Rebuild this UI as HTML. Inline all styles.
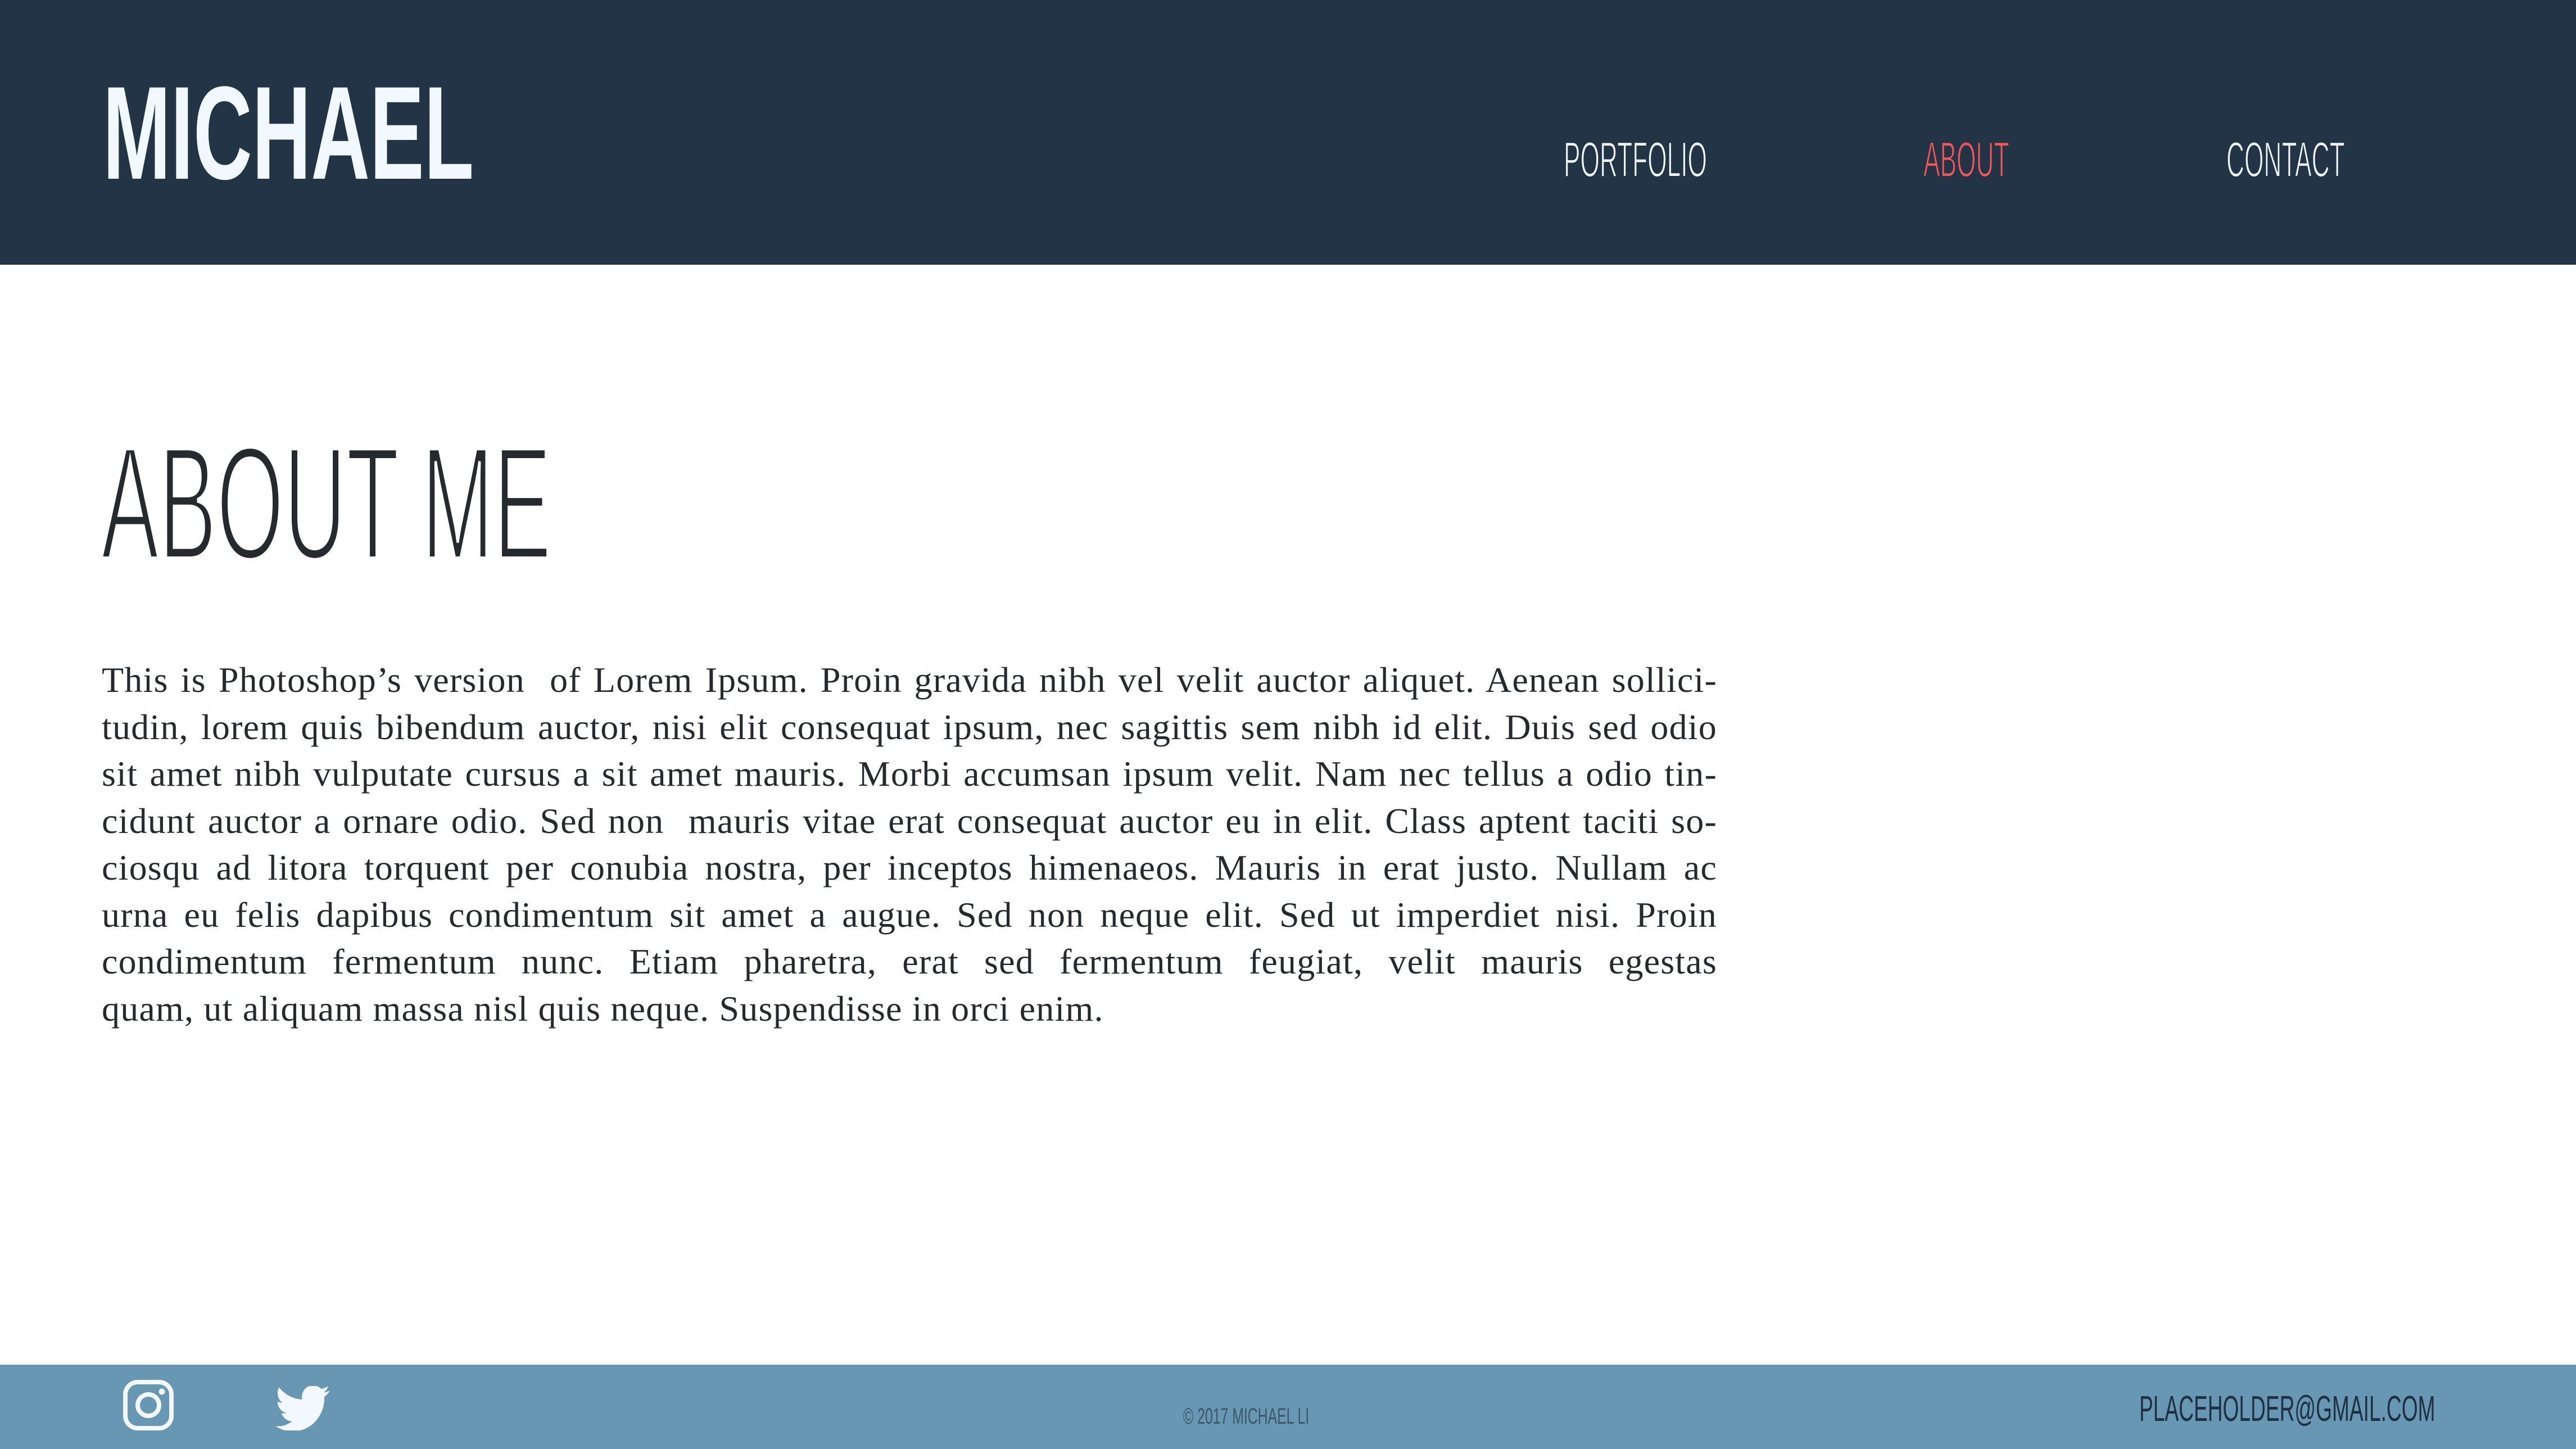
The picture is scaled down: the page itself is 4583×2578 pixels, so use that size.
<!DOCTYPE html>
<html><head><meta charset="utf-8"><style>
html,body{margin:0;padding:0}
body{width:4583px;height:2578px;position:relative;overflow:hidden;background:#fff;font-family:"Liberation Sans",sans-serif}
.hdr{position:absolute;left:0;top:0;width:4583px;height:471px;background:#243447}
.t{position:absolute;white-space:nowrap;line-height:1;transform-origin:0 0}
.logo{left:183px;top:119px;font-size:236px;font-weight:bold;color:#f1f8ff;transform:scaleX(.614)}
.nav{top:240px;font-size:88px;color:#f1f8ff;transform:scaleX(.503);-webkit-text-stroke:2px #243447}
.h1{left:180px;top:752px;font-size:286px;color:#26292e;transform:scaleX(.538);-webkit-text-stroke:8px #fff}
.p{position:absolute;left:181px;top:1168px;width:2874px;font-family:"Liberation Serif",serif;font-size:64px;color:#26292e;line-height:83.5px;letter-spacing:1.2px}
.p div{text-align:justify;text-align-last:justify;height:83.5px;white-space:nowrap}
.p div.l{text-align-last:left}
.ftr{position:absolute;left:0;top:2428px;width:4583px;height:150px;background:#6797b2}
</style></head><body>
<div class="hdr"></div>
<div class="t logo">MICHAEL</div>
<div class="t nav" style="left:2782px">PORTFOLIO</div>
<div class="t nav" style="left:3422px;color:#f25555">ABOUT</div>
<div class="t nav" style="left:3961px">CONTACT</div>
<div class="t h1">ABOUT ME</div>
<div class="p">
<div>This is Photoshop’s version&nbsp; of Lorem Ipsum. Proin gravida nibh vel velit auctor aliquet. Aenean sollici-</div>
<div>tudin, lorem quis bibendum auctor, nisi elit consequat ipsum, nec sagittis sem nibh id elit. Duis sed odio</div>
<div>sit amet nibh vulputate cursus a sit amet mauris. Morbi accumsan ipsum velit. Nam nec tellus a odio tin-</div>
<div>cidunt auctor a ornare odio. Sed non&nbsp; mauris vitae erat consequat auctor eu in elit. Class aptent taciti so-</div>
<div>ciosqu ad litora torquent per conubia nostra, per inceptos himenaeos. Mauris in erat justo. Nullam ac</div>
<div>urna eu felis dapibus condimentum sit amet a augue. Sed non neque elit. Sed ut imperdiet nisi. Proin</div>
<div>condimentum fermentum nunc. Etiam pharetra, erat sed fermentum feugiat, velit mauris egestas</div>
<div class="l">quam, ut aliquam massa nisl quis neque. Suspendisse in orci enim.</div>
</div>
<div class="ftr"></div>
<svg style="position:absolute;left:219px;top:2455px" width="90" height="90" viewBox="0 0 90 90">
<rect x="4" y="4" width="82" height="82" rx="22" fill="none" stroke="#f1f8ff" stroke-width="8"/>
<circle cx="45" cy="45" r="19" fill="none" stroke="#f1f8ff" stroke-width="8"/>
<circle cx="69" cy="21" r="5.5" fill="#f1f8ff"/>
</svg>
<svg style="position:absolute;left:490px;top:2466px" width="97" height="79" viewBox="0 2.6 24 18.8" preserveAspectRatio="none">
<path fill="#f1f8ff" d="M23.954 4.569a10 10 0 01-2.825.775 4.958 4.958 0 002.163-2.723c-.951.555-2.005.959-3.127 1.184a4.920 4.920 0 00-8.384 4.482C7.691 8.094 4.066 6.130 1.640 3.161a4.822 4.822 0 00-.666 2.475c0 1.710.870 3.213 2.188 4.096a4.904 4.904 0 01-2.228-.616v.061a4.923 4.923 0 003.946 4.827 4.996 4.996 0 01-2.212.085 4.937 4.937 0 004.604 3.417 9.868 9.868 0 01-6.102 2.105c-.39 0-.779-.023-1.170-.067a13.995 13.995 0 007.557 2.209c9.053 0 13.998-7.496 13.998-13.985 0-.21 0-.42-.015-.63A9.935 9.935 0 0024 4.590z"/>
</svg>
<div class="t" style="left:2105px;top:2500px;font-size:40px;color:#3e5568;transform:scaleX(.62)">© 2017 MICHAEL LI</div>
<div class="t" style="left:3806px;top:2474px;font-size:64px;color:#1e3042;transform:scaleX(.58)">PLACEHOLDER@GMAIL.COM</div>
</body></html>
